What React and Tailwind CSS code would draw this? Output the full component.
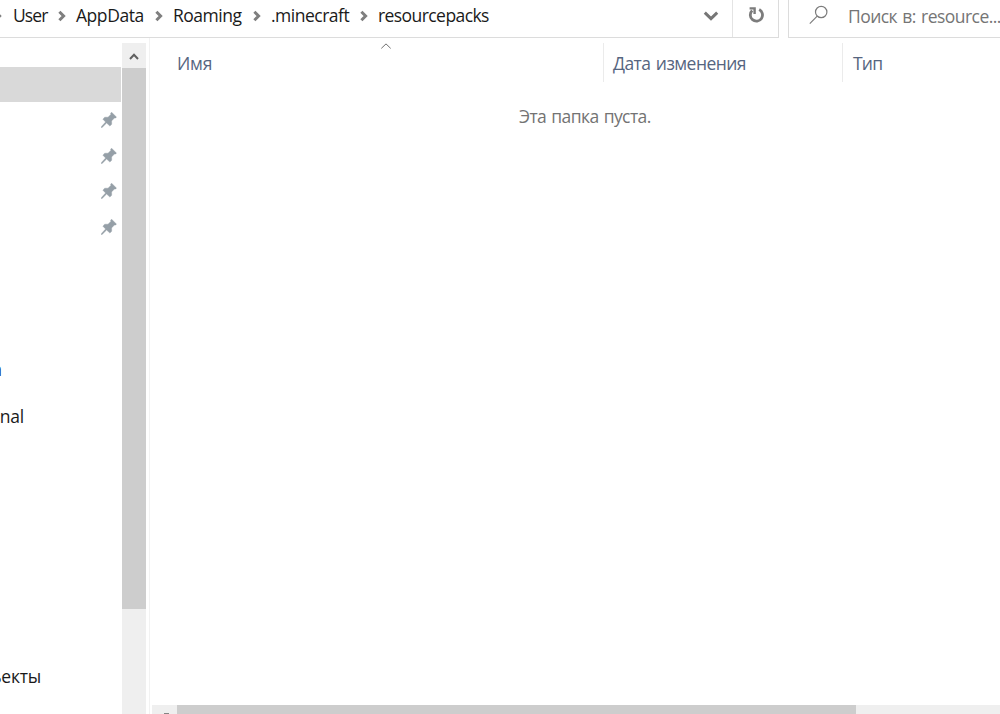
import React from 'react';

const crumbs = [
  { label: 'User', slot: 'w-[43px]', text: 'tracking-[-0.9px]' },
  { label: 'AppData', slot: 'w-[77px]', text: 'tracking-[-0.45px]' },
  { label: 'Roaming', slot: 'w-[78px]', text: 'tracking-[-0.48px]' },
  { label: '.minecraft', slot: 'w-[87px]', text: 'tracking-[-0.5px]' },
  { label: 'resourcepacks', slot: 'w-[120px]', text: 'tracking-[-0.57px]' },
];

const pins = [0, 1, 2, 3];

function CrumbArrow() {
  return (
    <svg className="ml-px w-2 h-3 shrink-0" viewBox="0 0 8 12" fill="none" stroke="#7f7f7f" strokeWidth="3">
      <path d="M1.4 1.8 5.6 6 1.4 10.2" />
    </svg>
  );
}

function Pin() {
  return (
    <svg className="w-4 h-4" viewBox="0 0 16 16" fill="#959fa7">
      <path d="M10.6.2 15.4 5 14.8 6 13.4 6.1 10.6 8.9 10.7 12.2 8.9 14.1 5.6 11 1.4 15.2.2 15.7.5 14.4 4.6 10 1.9 7.2 3.7 5.2 7 5.2 9.8 2.4 9.7 1Z" stroke="#959fa7" strokeWidth=".4" />
    </svg>
  );
}

function AddressBar() {
  return (
    <div className="flex h-[38px] shrink-0">
      <div className="flex w-[779px] border-r border-b border-[#dcdcdc]">
        <div className="flex items-center h-[31px] w-[732px] text-[#1a1a1a]">
          <div className="w-[13px] overflow-hidden">
            <div className="-ml-[7px]"><CrumbArrow /></div>
          </div>
          {crumbs.map((crumb, idx) => (
            <div key={crumb.label} className="flex items-center">
              <span className={`${crumb.slot} ${crumb.text}`}>{crumb.label}</span>
              {idx < crumbs.length - 1 && <div className="w-5 pl-px"><CrumbArrow /></div>}
            </div>
          ))}
          <svg className="ml-auto mr-[13px] w-4 h-[10px]" viewBox="0 0 16 10" fill="none" stroke="#767676" strokeWidth="3">
            <path d="M1.8 1.6 8 7.6 14.2 1.6" />
          </svg>
        </div>
        <div className="w-[46px] border-l border-[#e4e4e4]">
          <svg className="ml-[15px] mt-[6px] w-[18px] h-[18px]" viewBox="0 0 18 18" fill="none" stroke="#7c7c7c" strokeWidth="2.8">
            <path d="M11.2 3.6A6.1 6.1 0 1 1 4.2 4.6" />
            <path d="M1.6 2.4H6.6V8" strokeWidth="2.4" />
          </svg>
        </div>
      </div>
      <div className="ml-[9px] flex flex-1 border-l border-b border-[#dcdcdc]">
        <svg className="ml-5 mt-[5px] w-5 h-5 shrink-0" viewBox="0 0 20 20" fill="none" stroke="#7c7c7c" strokeWidth="1.2">
          <circle cx="12.2" cy="7" r="5.7" />
          <path d="M8.2 11.2.8 18.6" />
        </svg>
        <span className="ml-[19px] h-[32px] leading-[32px] whitespace-nowrap text-[#757575] tracking-[-0.54px] [word-spacing:1.2px]">Поиск в: resource...</span>
      </div>
    </div>
  );
}

function Sidebar() {
  return (
    <div className="w-[121px] h-full overflow-hidden text-[#1a1a1a]">
      <div className="mt-[29px] h-[35px] bg-[#d9d9d9]" />
      <div className="flex flex-col items-end pr-[3.6px] pt-[10px] gap-[19.5px]">
        {pins.map((pin) => <Pin key={pin} />)}
      </div>
      <div className="mt-[122px] h-6 leading-6 flex w-[2px] justify-end overflow-hidden text-[#10204a]"><span>а</span></div>
      <div className="mt-[23px] h-6 leading-6 flex w-6 justify-end"><span className="tracking-[-0.2px]">nal</span></div>
      <div className="mt-[236px] h-6 leading-6 flex w-[41px] justify-end"><span className="tracking-[-0.2px]">объекты</span></div>
    </div>
  );
}

function SideScroll() {
  return (
    <div className="mt-[5px] ml-px w-6 bg-[#efefef]">
      <div className="h-[25px] pt-[10px] pl-[7px]">
        <svg className="w-[10px] h-[7px]" viewBox="0 0 10 7" fill="none" stroke="#606060" strokeWidth="2">
          <path d="M1 6 5 1.8 9 6" />
        </svg>
      </div>
      <div className="h-[541px] bg-[#cdcdcd]" />
    </div>
  );
}

function FileList() {
  return (
    <div className="flex flex-col flex-1 pl-[2px]">
      <div className="relative mt-[5px] flex h-[39px] leading-[41px] text-[#56657f]">
        <div className="w-[452px] border-r border-[#ebebeb] pl-[25px] tracking-[-0.2px]">Имя</div>
        <div className="w-[239px] border-r border-[#ebebeb] pl-[9px] tracking-[-0.55px] [word-spacing:1.4px]">Дата изменения</div>
        <div className="flex-1 pl-[10px] tracking-[-0.8px]">Тип</div>
        <svg className="absolute left-[229px] top-0 w-[10px] h-[6px]" viewBox="0 0 10 6" fill="none" stroke="#707070">
          <path d="M.3 5.4 5 .9 9.7 5.4" />
        </svg>
      </div>
      <div className="mt-[22px] h-6 leading-6 pl-[367px] text-[#737373] tracking-[-0.6px] [word-spacing:1.2px]">Эта папка пуста.</div>
      <div className="mt-auto flex h-[9px] bg-[#efefef]">
        <div className="w-[25px] flex justify-center items-end">
          <div className="ml-[3px] w-[5px] h-px bg-[#858585]" />
        </div>
        <div className="w-[679px] bg-[#cdcdcd]" />
      </div>
    </div>
  );
}

export default function App() {
  return (
    <div className="flex flex-col w-[1000px] h-[714px] overflow-hidden bg-white text-[17.5px] font-['Open_Sans',sans-serif]">
      <AddressBar />
      <div className="flex h-[676px]">
        <Sidebar />
        <SideScroll />
        <div className="w-1 border-r border-[#f2f2f2]" />
        <FileList />
      </div>
    </div>
  );
}
